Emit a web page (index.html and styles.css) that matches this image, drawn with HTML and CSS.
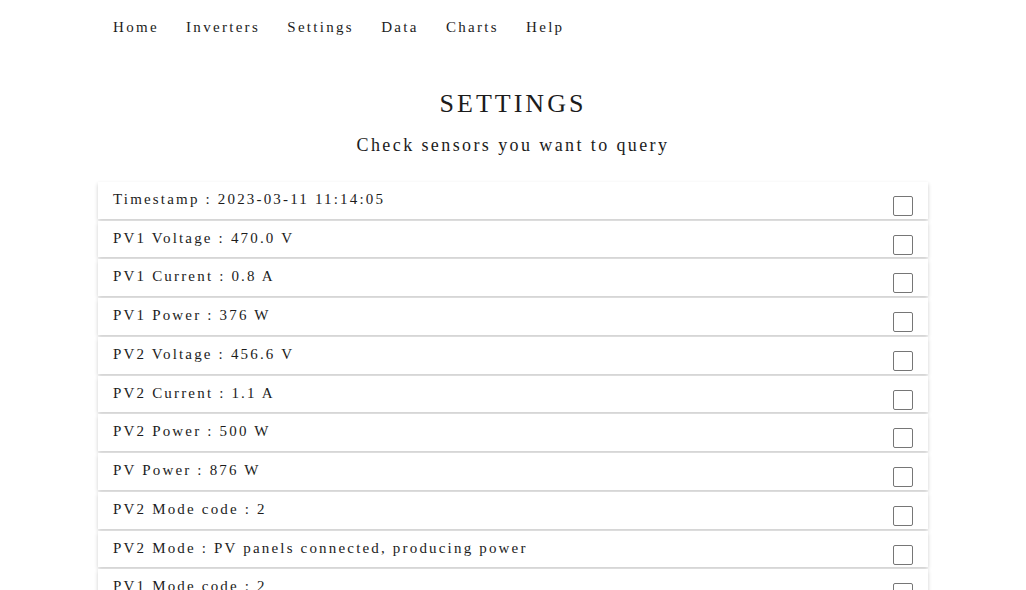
FILE: index.html
```html
<!DOCTYPE html>
<html lang="en">
<head>
<meta charset="utf-8">
<title>Settings</title>
<link rel="stylesheet" href="styles.css">
</head>
<body>
<div class="page">
  <nav class="nav">
    <a class="nav-link" href="#">Home</a>
    <a class="nav-link" href="#">Inverters</a>
    <a class="nav-link" href="#">Settings</a>
    <a class="nav-link" href="#">Data</a>
    <a class="nav-link" href="#">Charts</a>
    <a class="nav-link" href="#">Help</a>
  </nav>
  <h1 class="title">SETTINGS</h1>
  <p class="subtitle">Check sensors you want to query</p>
  <ul class="sensor-list">
    <li class="sensor"><span class="sensor-label">Timestamp : 2023-03-11 11:14:05</span><input class="sensor-check" type="checkbox"></li>
    <li class="sensor"><span class="sensor-label">PV1 Voltage : 470.0 V</span><input class="sensor-check" type="checkbox"></li>
    <li class="sensor"><span class="sensor-label">PV1 Current : 0.8 A</span><input class="sensor-check" type="checkbox"></li>
    <li class="sensor"><span class="sensor-label">PV1 Power : 376 W</span><input class="sensor-check" type="checkbox"></li>
    <li class="sensor"><span class="sensor-label">PV2 Voltage : 456.6 V</span><input class="sensor-check" type="checkbox"></li>
    <li class="sensor"><span class="sensor-label">PV2 Current : 1.1 A</span><input class="sensor-check" type="checkbox"></li>
    <li class="sensor"><span class="sensor-label">PV2 Power : 500 W</span><input class="sensor-check" type="checkbox"></li>
    <li class="sensor"><span class="sensor-label">PV Power : 876 W</span><input class="sensor-check" type="checkbox"></li>
    <li class="sensor"><span class="sensor-label">PV2 Mode code : 2</span><input class="sensor-check" type="checkbox"></li>
    <li class="sensor"><span class="sensor-label">PV2 Mode : PV panels connected, producing power</span><input class="sensor-check" type="checkbox"></li>
    <li class="sensor"><span class="sensor-label">PV1 Mode code : 2</span><input class="sensor-check" type="checkbox"></li>
    <li class="sensor"><span class="sensor-label">PV1 Mode : PV panels connected, producing power</span><input class="sensor-check" type="checkbox"></li>
  </ul>
</div>
</body>
</html>
```

FILE: styles.css
```css
html, body {
  margin: 0;
  padding: 0;
  background: #ffffff;
}

body {
  font-family: "Liberation Serif", "Times New Roman", serif;
  color: #1c1c1c;
  letter-spacing: 0.15em;
}

.page {
  width: 830px;
  margin: 0 auto;
}

.nav {
  display: flex;
  gap: 27.2px;
  padding: 17px 0 0 15px;
  height: 20px;
}

.nav-link {
  font-size: 15px;
  line-height: 20px;
  letter-spacing: 2.3px;
  color: #1c1c1c;
  text-decoration: none;
}

.title {
  margin: 52.4px 0 0;
  font-size: 26px;
  line-height: 30px;
  font-weight: normal;
  letter-spacing: 3px;
  text-align: center;
}

.subtitle {
  margin: 13.7px 0 0;
  font-size: 18px;
  line-height: 24px;
  text-align: center;
}

.sensor-list {
  list-style: none;
  margin: 24.9px 0 0;
  padding: 0;
  display: flex;
  flex-direction: column;
  gap: 2px;
}

.sensor {
  display: flex;
  justify-content: space-between;
  align-items: flex-start;
  height: 36.75px;
  box-sizing: border-box;
  padding: 7px 15px 0 15px;
  background: #ffffff;
  box-shadow: 0 2px 4px rgba(0, 0, 0, 0.2);
}

.sensor-label {
  font-size: 15px;
  line-height: 20px;
  letter-spacing: 2.18px;
}

.sensor-check {
  appearance: none;
  -webkit-appearance: none;
  margin: 7px 0 0;
  width: 20px;
  height: 20px;
  box-sizing: border-box;
  border: 1px solid #767676;
  border-radius: 2px;
  background: #ffffff;
  flex-shrink: 0;
}
```
